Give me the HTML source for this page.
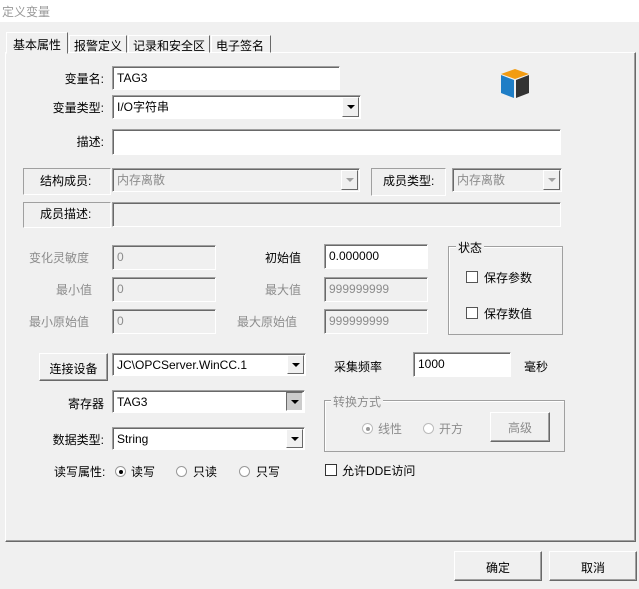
<!DOCTYPE html>
<html><head><meta charset="utf-8"><style>
*{box-sizing:border-box;margin:0;padding:0}
body{width:639px;height:589px;background:#f0f0f0;font:12px "Liberation Sans","Noto Sans CJK SC",sans-serif;color:#000;position:relative;overflow:hidden}
.a{position:absolute;white-space:nowrap}
.e{position:absolute;background:#fff;border:1px solid;border-color:#a0a0a0 #fff #fff #a0a0a0;box-shadow:inset 1px 1px 0 #696969;padding:2px 0 0 4px;line-height:18px}
.d{background:#f0f0f0;color:#8c8c8c}
.btn{position:absolute;border:1px solid;border-color:#fff #696969 #696969 #fff;box-shadow:inset -1px -1px 0 #a0a0a0;background:#f0f0f0;text-align:center}
.arr{position:absolute;right:1px;top:1px;bottom:1px;width:17px;border:1px solid;border-color:#fff #696969 #696969 #fff;background:#f0f0f0}
.arr:after{content:"";position:absolute;left:4px;top:7px;border:4px solid transparent;border-top:4px solid #000;border-bottom:0}
.arr.g:after{border-top-color:#a0a0a0}
.et{position:absolute;border:1px solid;border-color:#a0a0a0 #fff #fff #a0a0a0}
.grp{position:absolute;border:1px solid #a0a0a0;box-shadow:1px 1px 0 #fff inset}
.cb{position:absolute;width:12px;height:12px;background:#fff;border:1px solid #555}
.rd{position:absolute;width:11px;height:11px;border-radius:50%;background:#fff;border:1px solid #999}
.g{color:#8c8c8c}
.r{text-align:right}
</style></head><body>
<div class="a" style="left:0;top:0;width:639px;height:22px;background:#fff"></div>
<div class="a" style="left:2px;top:3px;color:#999;font-size:12px">定义变量</div>
<div class="a" style="left:5px;top:52px;width:631px;height:490px;border:1px solid;border-color:#fff #696969 #696969 #fff;box-shadow:inset -1px -1px 0 #a0a0a0"></div>
<div class="a" style="left:69px;top:35px;width:58px;height:18px;border:1px solid;border-color:#fff #696969 transparent #fff;padding:1px 0 0 4px">报警定义</div>
<div class="a" style="left:128px;top:35px;width:82px;height:18px;border:1px solid;border-color:#fff #696969 transparent #fff;padding:1px 0 0 4px">记录和安全区</div>
<div class="a" style="left:211px;top:35px;width:60px;height:18px;border:1px solid;border-color:#fff #696969 transparent #fff;padding:1px 0 0 4px">电子签名</div>
<div class="a" style="left:6px;top:32px;width:62px;height:22px;background:#f0f0f0;border:1px solid;border-color:#fff #696969 transparent #fff;padding:3px 0 0 6px">基本属性</div>

<div class="a r" style="left:40px;top:70px;width:64px">变量名:</div>
<div class="e" style="left:112px;top:66px;width:228px;height:24px">TAG3</div>
<div class="a r" style="left:40px;top:99px;width:64px">变量类型:</div>
<div class="e" style="left:112px;top:95px;width:249px;height:24px">I/O字符串<div class="arr"></div></div>
<div class="a r" style="left:40px;top:133px;width:64px">描述:</div>
<div class="e" style="left:112px;top:129px;width:449px;height:26px"></div>
<svg class="a" style="left:499px;top:68px" width="32" height="31" viewBox="0 0 32 31"><polygon points="16,1 30,6 16,11 2,6" fill="#f39c12"/><polygon points="2,7 15,12 15,30 2,25" fill="#1f7ec6"/><polygon points="17,12 30,7 30,25 17,30" fill="#333"/></svg>

<div class="et" style="left:23px;top:168px;width:88px;height:27px"></div>
<div class="a" style="left:40px;top:172px">结构成员:</div>
<div class="e d" style="left:112px;top:168px;width:248px;height:24px">内存离散<div class="arr g"></div></div>
<div class="et" style="left:371px;top:168px;width:75px;height:28px"></div>
<div class="a" style="left:383px;top:172px">成员类型:</div>
<div class="e d" style="left:452px;top:168px;width:110px;height:24px">内存离散<div class="arr g"></div></div>
<div class="et" style="left:23px;top:202px;width:88px;height:26px"></div>
<div class="a" style="left:40px;top:205px">成员描述:</div>
<div class="e d" style="left:112px;top:202px;width:449px;height:25px"></div>

<div class="a g" style="left:29px;top:249px">变化灵敏度</div>
<div class="e d" style="left:112px;top:245px;width:104px;height:25px">0</div>
<div class="a g r" style="left:40px;top:281px;width:52px">最小值</div>
<div class="e d" style="left:112px;top:277px;width:104px;height:25px">0</div>
<div class="a g" style="left:29px;top:313px">最小原始值</div>
<div class="e d" style="left:112px;top:309px;width:104px;height:25px">0</div>
<div class="a" style="left:265px;top:249px">初始值</div>
<div class="e" style="left:324px;top:244px;width:104px;height:25px">0.000000</div>
<div class="a g" style="left:265px;top:281px">最大值</div>
<div class="e d" style="left:324px;top:277px;width:104px;height:25px">999999999</div>
<div class="a g" style="left:237px;top:313px">最大原始值</div>
<div class="e d" style="left:324px;top:309px;width:104px;height:25px">999999999</div>

<div class="grp" style="left:448px;top:246px;width:115px;height:89px"></div>
<div class="a" style="left:456px;top:239px;background:#f0f0f0;padding:0 2px">状态</div>
<div class="cb" style="left:466px;top:271px"></div><div class="a" style="left:484px;top:269px">保存参数</div>
<div class="cb" style="left:466px;top:307px"></div><div class="a" style="left:484px;top:305px">保存数值</div>

<div class="btn" style="left:39px;top:353px;width:69px;height:28px;padding-top:6px">连接设备</div>
<div class="e" style="left:112px;top:353px;width:194px;height:23px">JC\OPCServer.WinCC.1<div class="arr"></div></div>
<div class="a" style="left:334px;top:358px">采集频率</div>
<div class="e" style="left:413px;top:352px;width:98px;height:25px">1000</div>
<div class="a" style="left:524px;top:358px">毫秒</div>

<div class="a r" style="left:40px;top:395px;width:64px">寄存器</div>
<div class="e" style="left:112px;top:390px;width:193px;height:23px">TAG3<div class="arr" style="background:#ccc;border-color:#696969 #fff #fff #696969"></div></div>
<div class="a r" style="left:40px;top:431px;width:64px">数据类型:</div>
<div class="e" style="left:112px;top:427px;width:193px;height:23px">String<div class="arr"></div></div>
<div class="a" style="left:54px;top:463px">读写属性:</div>
<div class="rd" style="left:115px;top:466px"></div><div class="a" style="left:118.5px;top:469.5px;width:4px;height:4px;border-radius:50%;background:#000"></div>
<div class="a" style="left:131px;top:463px">读写</div>
<div class="rd" style="left:176px;top:466px"></div><div class="a" style="left:193px;top:463px">只读</div>
<div class="rd" style="left:239px;top:466px"></div><div class="a" style="left:256px;top:463px">只写</div>

<div class="grp" style="left:324px;top:400px;width:241px;height:52px"></div>
<div class="a g" style="left:331px;top:393px;background:#f0f0f0;padding:0 2px">转换方式</div>
<div class="rd" style="left:362px;top:423px;border-color:#bbb"></div><div class="a" style="left:365.5px;top:426.5px;width:4px;height:4px;border-radius:50%;background:#999"></div>
<div class="a g" style="left:378px;top:420px">线性</div>
<div class="rd" style="left:423px;top:423px;border-color:#bbb"></div>
<div class="a g" style="left:439px;top:420px">开方</div>
<div class="btn g" style="left:490px;top:412px;width:60px;height:30px;padding-top:6px">高级</div>
<div class="cb" style="left:325px;top:464px;border-color:#333"></div>
<div class="a" style="left:342px;top:462px">允许DDE访问</div>

<div class="btn" style="left:454px;top:551px;width:88px;height:30px;padding-top:7px">确定</div>
<div class="btn" style="left:549px;top:551px;width:88px;height:30px;padding-top:7px">取消</div>
</body></html>
